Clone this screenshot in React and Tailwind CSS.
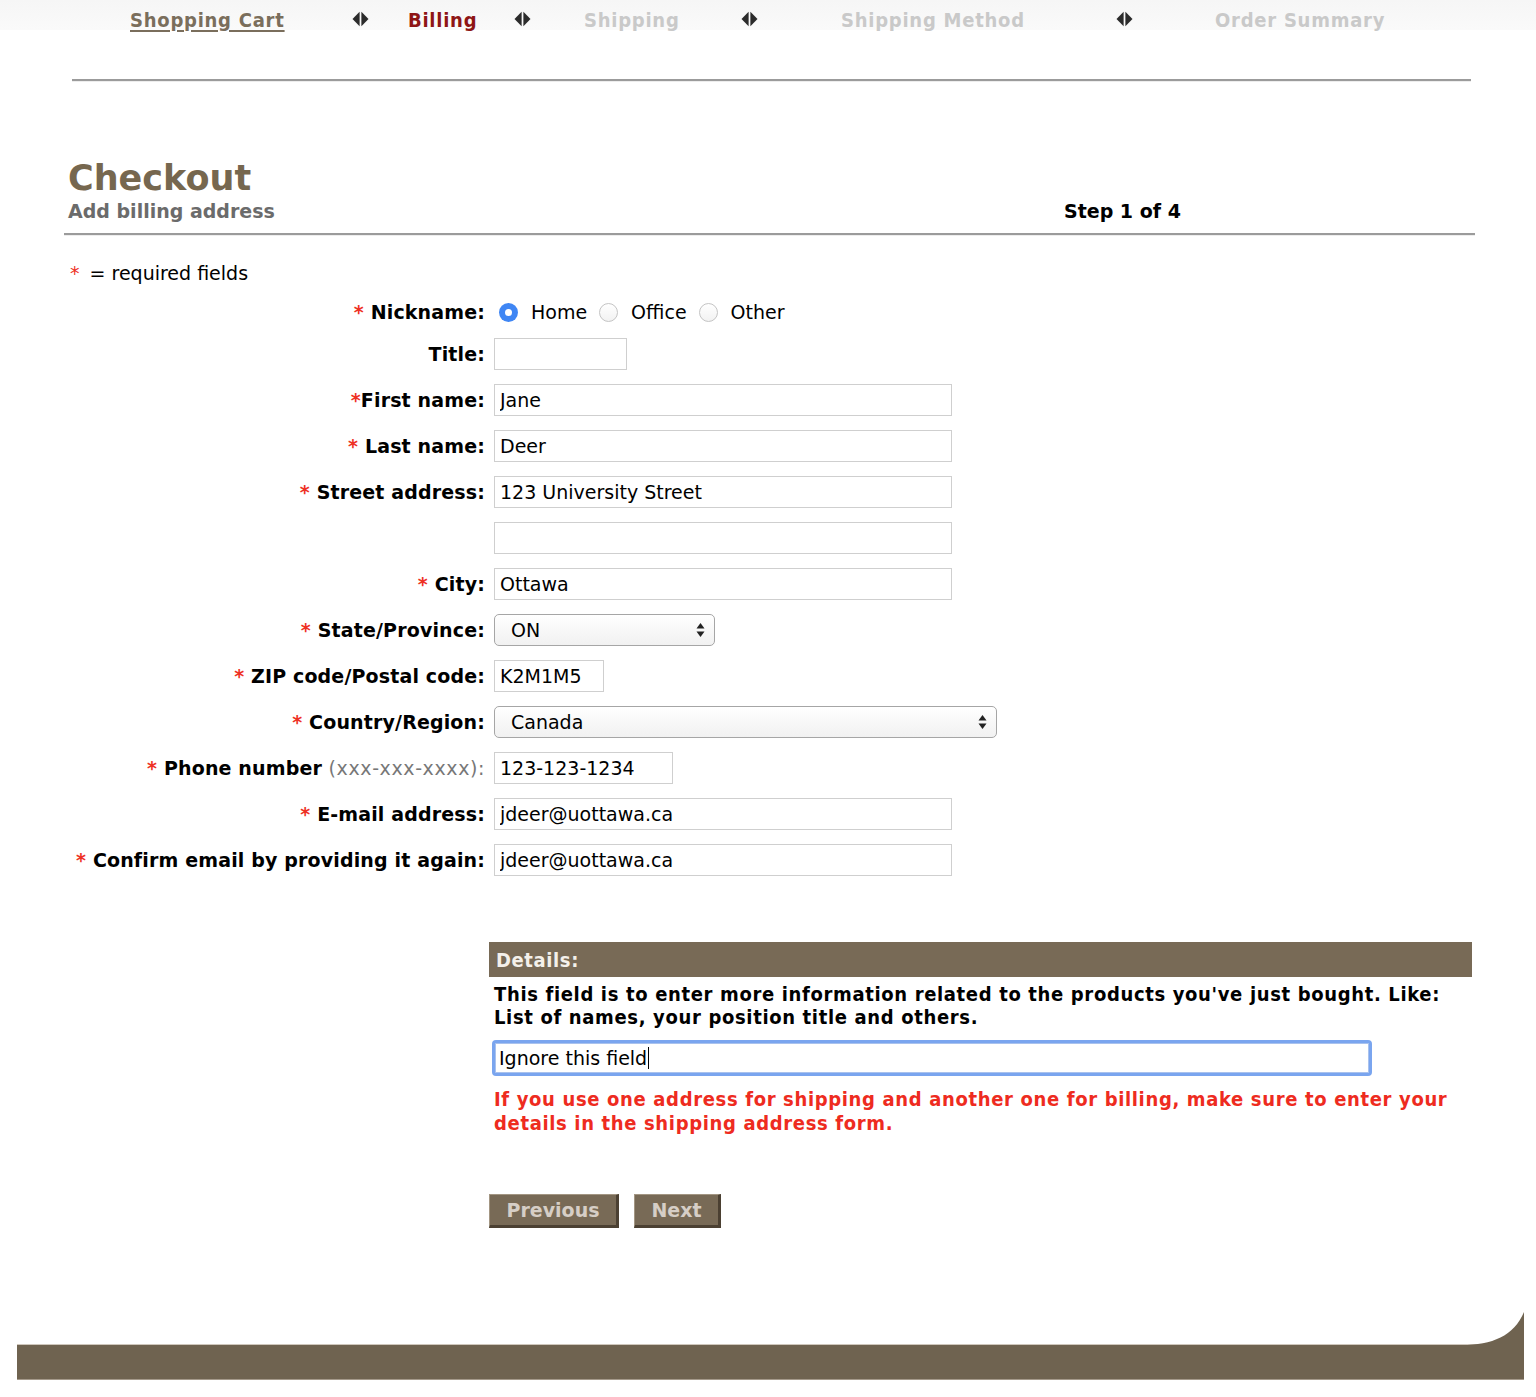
import React from 'react';

const navFont = "font-['DejaVu_Sans_Condensed','DejaVu_Sans',sans-serif] [font-stretch:condensed]";

function NavArrow() {
  return (
    <svg width="17" height="16" viewBox="0 0 17 16" className="shrink-0">
      <path d="M0.5 8 L7.6 0.8 L7.6 15.2 Z" fill="#2b2b2b" />
      <path d="M9.4 0.8 L16.5 8 L9.4 15.2 Z" fill="#2b2b2b" />
    </svg>
  );
}

function Radio({ checked, label }) {
  return (
    <div className="flex items-center">
      {checked ? (
        <span className="w-[19px] h-[19px] rounded-full bg-[#3f86f4] flex items-center justify-center">
          <span className="w-[7px] h-[7px] rounded-full bg-white" />
        </span>
      ) : (
        <span className="w-[19px] h-[19px] rounded-full border border-[#c4c4c4] bg-gradient-to-b from-white to-[#f2f2f2]" />
      )}
      <span className="ml-[13px]">{label}</span>
    </div>
  );
}

function TextBox({ value = '', width }) {
  return (
    <input
      readOnly
      value={value}
      className="h-[32px] border border-[#cfcfcf] bg-white px-[5px] text-[19px] text-black outline-none font-['DejaVu_Sans',sans-serif]"
      style={{ width }}
    />
  );
}

function SelectBox({ value, width }) {
  return (
    <div
      className="h-[32px] rounded-[5px] border border-[#a6a6a6] bg-gradient-to-b from-white to-[#f1f1f1] flex items-center justify-between pl-[16px] pr-[9px]"
      style={{ width }}
    >
      <span>{value}</span>
      <svg width="9" height="16" viewBox="0 0 9 16">
        <path d="M4.5 1 L8.5 6.5 L0.5 6.5 Z" fill="#222" />
        <path d="M0.5 9.5 L8.5 9.5 L4.5 15 Z" fill="#222" />
      </svg>
    </div>
  );
}

function Req() {
  return <span className="text-[#ee3124]">*</span>;
}

const rows = [
  { label: 'Title:', w: 133 },
  { req: true, tight: true, label: 'First name:', value: 'Jane', w: 458 },
  { req: true, label: 'Last name:', value: 'Deer', w: 458 },
  { req: true, label: 'Street address:', value: '123 University Street', w: 458 },
  { label: '', value: '', w: 458 },
  { req: true, label: 'City:', value: 'Ottawa', w: 458 },
  { req: true, label: 'State/Province:', select: true, value: 'ON', w: 221 },
  { req: true, label: 'ZIP code/Postal code:', value: 'K2M1M5', w: 110 },
  { req: true, label: 'Country/Region:', select: true, value: 'Canada', w: 503 },
  { req: true, label: 'Phone number', hint: '(xxx-xxx-xxxx):', value: '123-123-1234', w: 179 },
  { req: true, label: 'E-mail address:', value: 'jdeer@uottawa.ca', w: 458 },
  { req: true, label: 'Confirm email by providing it again:', value: 'jdeer@uottawa.ca', w: 458 },
];

export default function App() {
  return (
    <div className="w-[1536px] min-h-[1397px] bg-white text-black text-[19px] font-['DejaVu_Sans',sans-serif]">
      {/* progress nav */}
      <div className={`h-[30px] bg-gradient-to-b from-[#f6f6f6] to-[#fafafa] flex items-start pt-[8px] pl-[130px] font-bold text-[20px] leading-[24px] tracking-[0.75px] ${navFont}`}>
        <div className="w-[222px]">
          <span className="text-[#7a6e5c] underline underline-offset-[3px] decoration-[2px]">Shopping Cart</span>
        </div>
        <div className="pt-[3px]"><NavArrow /></div>
        <div className="ml-[39px] w-[106px] text-[#8e1515]">Billing</div>
        <div className="pt-[3px]"><NavArrow /></div>
        <div className="ml-[53px] w-[157px] text-[#c9c9c9]">Shipping</div>
        <div className="pt-[3px]"><NavArrow /></div>
        <div className="ml-[83px] w-[275px] text-[#c9c9c9]">Shipping Method</div>
        <div className="pt-[3px]"><NavArrow /></div>
        <div className="ml-[82px] text-[#c9c9c9]">Order Summary</div>
      </div>

      <div className="mt-[49px] ml-[72px] w-[1399px] border-t-2 border-b border-t-[#9b9b9b] border-b-[#ededed]" />

      {/* heading */}
      <div className="ml-[64px] w-[1411px]">
        <h1 className="mt-[76px] pl-[4px] text-[35px] leading-[40px] font-bold text-[#76674f]">Checkout</h1>
        <div className="mt-[1px] flex items-center leading-[24px] font-bold">
          <div className="w-[1000px] pl-[4px] text-[#6b6b6b]">Add billing address</div>
          <div>Step 1 of 4</div>
        </div>
        <div className="mt-[10px] border-t-2 border-b border-t-[#9b9b9b] border-b-[#ededed]" />
      </div>

      <div className="mt-[25px] ml-[70px] leading-[24px]">
        <Req /> <span className="ml-[4px]">= required fields</span>
      </div>

      {/* form */}
      <div className="mt-[13px]">
        <div className="flex items-center h-[28px] mb-[12px]">
          <div className="w-[494px] pr-[9px] text-right font-bold tracking-[0.15px]">
            <Req /> Nickname:
          </div>
          <div className="flex items-center gap-[12px] pl-[5px]">
            <Radio checked label="Home" />
            <Radio label="Office" />
            <Radio label="Other" />
          </div>
        </div>
        <div className="flex flex-col gap-y-[14px]">
          {rows.map((r, i) => (
            <div key={i} className="flex items-center h-[32px]">
              <div className="w-[494px] pr-[9px] text-right font-bold whitespace-nowrap tracking-[0.15px]">
                {r.req && <Req />}
                {r.req && !r.tight && ' '}
                {r.label}
                {r.hint && <span className="font-normal text-[#777] tracking-[0.6px]"> {r.hint}</span>}
              </div>
              {r.select ? <SelectBox value={r.value} width={r.w} /> : <TextBox value={r.value} width={r.w} />}
            </div>
          ))}
        </div>
      </div>

      {/* details */}
      <div className={`mt-[66px] ml-[489px] w-[983px] ${navFont}`}>
        <div className="h-[35px] bg-[#786a56] flex items-center pl-[7px] font-bold text-[20px] tracking-[0.6px] text-[#f4f0ea]">Details:</div>
        <p className="mt-[6px] pl-[5px] leading-[23px] font-bold text-[20px] tracking-[0.65px]">
          This field is to enter more information related to the products you've just bought. Like:
          <br />
          List of names, your position title and others.
        </p>
        <div className="mt-[11px] ml-[3px] w-[880px] h-[36px] rounded-[4px] bg-[#7aa5ef] p-[3px]">
          <div className="h-full bg-white border border-[#a9c2ee] flex items-center pl-[3px] text-[19px] font-['DejaVu_Sans',sans-serif] [font-stretch:normal] tracking-normal">
            <span>Ignore this field</span>
            <span className="w-[1px] h-[22px] bg-black ml-[1px]" />
          </div>
        </div>
        <p className="mt-[11px] pl-[5px] leading-[24px] font-bold text-[20px] tracking-[0.65px] text-[#ee2b20]">
          If you use one address for shipping and another one for billing, make sure to enter your
          <br />
          details in the shipping address form.
        </p>
      </div>

      {/* buttons */}
      <div className="mt-[59px] ml-[489px] flex gap-[15px]">
        <button className="h-[34px] w-[130px] bg-[#786a56] border-t border-l border-t-[#a39683] border-l-[#a39683] border-b-[3px] border-r-[3px] border-b-[#4b4032] border-r-[#4b4032] font-bold text-[#d6cec6]">
          Previous
        </button>
        <button className="h-[34px] w-[87px] bg-[#786a56] border-t border-l border-t-[#a39683] border-l-[#a39683] border-b-[3px] border-r-[3px] border-b-[#4b4032] border-r-[#4b4032] font-bold text-[#d6cec6]">
          Next
        </button>
      </div>

      {/* footer band */}
      <div className="relative mt-[116px] ml-[17px] w-[1507px] h-[36px] bg-[#6f6350] border-t border-t-[#cfc7bc] border-b border-b-[#a59a8b]">
        <svg className="absolute right-0 bottom-full" width="62" height="33" viewBox="0 0 62 33">
          <path d="M0 33 C 30 33, 52 24, 62 0 L62 33 Z" fill="#6f6350" />
        </svg>
      </div>
    </div>
  );
}
